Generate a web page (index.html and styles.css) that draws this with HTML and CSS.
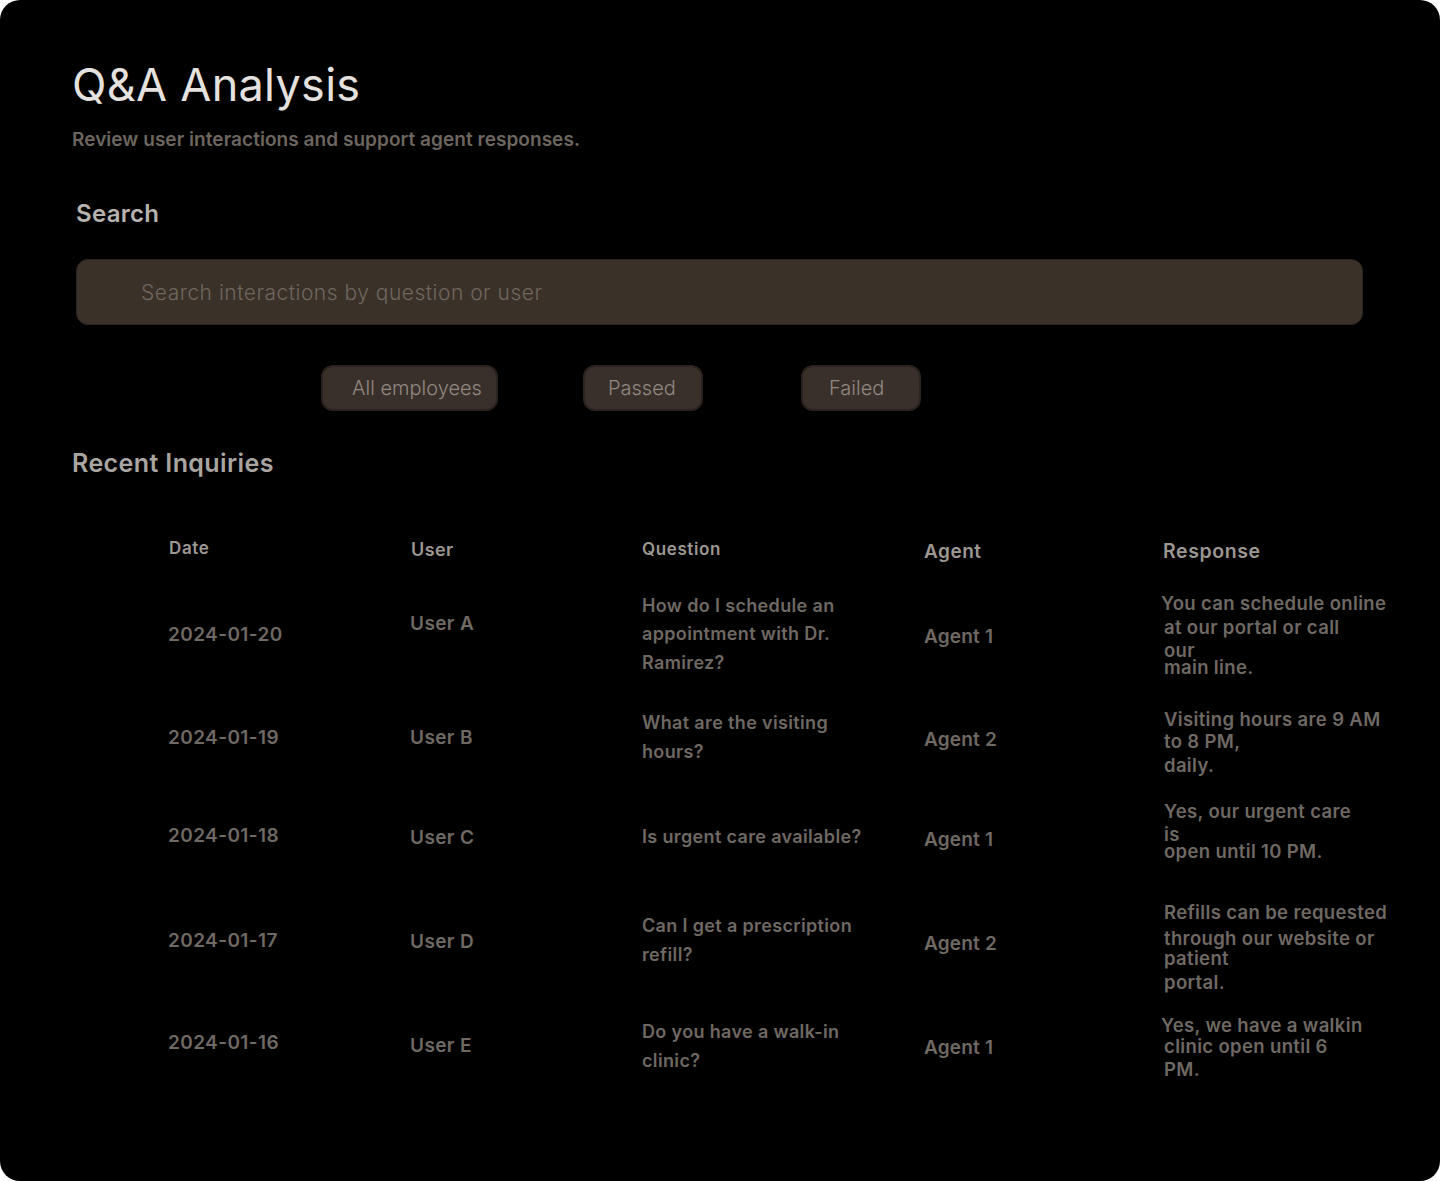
FILE: index.html
```html
<!DOCTYPE html>
<html lang="en">
<head>
<meta charset="utf-8">
<title>Q&amp;A Analysis</title>
<link rel="stylesheet" href="styles.css">
</head>
<body>
<main class="page">
  <h1 class="title">Q&amp;A Analysis</h1>
  <p class="subtitle">Review user interactions and support agent responses.</p>

  <h2 class="search-label">Search</h2>
  <div class="search-bar">
    <input class="search-input" type="text" placeholder="Search interactions by question or user">
  </div>

  <div class="filters">
    <button class="pill pill-all">All employees</button>
    <button class="pill pill-passed">Passed</button>
    <button class="pill pill-failed">Failed</button>
  </div>

  <h2 class="section-title">Recent Inquiries</h2>

  <div class="table">
    <div class="thead">
      <div class="th th-date">Date</div>
      <div class="th th-user">User</div>
      <div class="th th-question">Question</div>
      <div class="th th-agent">Agent</div>
      <div class="th th-response">Response</div>
    </div>

    <div class="tr">
      <div class="td date">2024-01-20</div>
      <div class="td user up">User A</div>
      <div class="td question">How do I schedule an appointment with Dr. Ramirez?</div>
      <div class="td agent">Agent 1</div>
      <div class="td response">
        <span class="ln out">You can schedule online</span>
        <span class="ln m2">at our portal or call</span>
        <span class="ln m1">our</span>
        <span class="ln m-5">main line.</span>
      </div>
    </div>

    <div class="tr">
      <div class="td date">2024-01-19</div>
      <div class="td user">User B</div>
      <div class="td question">What are the visiting hours?</div>
      <div class="td agent">Agent 2</div>
      <div class="td response down9">
        <span class="ln">Visiting hours are 9 AM</span>
        <span class="ln">to 8 PM,</span>
        <span class="ln m2">daily.</span>
      </div>
    </div>

    <div class="tr">
      <div class="td date up10">2024-01-18</div>
      <div class="td user up6">User C</div>
      <div class="td question up6">Is urgent care available?</div>
      <div class="td agent up6">Agent 1</div>
      <div class="td response up19">
        <span class="ln">Yes, our urgent care</span>
        <span class="ln m1">is</span>
        <span class="ln m-5">open until 10 PM.</span>
      </div>
    </div>

    <div class="tr">
      <div class="td date up6">2024-01-17</div>
      <div class="td user up4">User D</div>
      <div class="td question up6">Can I get a prescription refill?</div>
      <div class="td agent up4">Agent 2</div>
      <div class="td response down7">
        <span class="ln">Refills can be requested</span>
        <span class="ln m4">through our website or</span>
        <span class="ln m-2">patient</span>
        <span class="ln m2">portal.</span>
      </div>
    </div>

    <div class="tr">
      <div class="td date up8">2024-01-16</div>
      <div class="td user up2">User E</div>
      <div class="td question">Do you have a walk-in clinic?</div>
      <div class="td agent up2">Agent 1</div>
      <div class="td response">
        <span class="ln out">Yes, we have a walkin</span>
        <span class="ln m-1">clinic open until 6</span>
        <span class="ln m1">PM.</span>
      </div>
    </div>
  </div>
</main>
</body>
</html>
```

FILE: styles.css
```css
* {
  box-sizing: border-box;
}

html, body {
  margin: 0;
  padding: 0;
  background: #ffffff;
}

body {
  font-family: "Inter", "Noto Sans", sans-serif;
}

.page {
  width: 1440px;
  height: 1181px;
  background: #000000;
  border-radius: 20px;
  padding: 58px 0 0 72px;
  overflow: hidden;
}

.title {
  margin: 0;
  font-size: 45px;
  line-height: 54px;
  font-weight: 400;
  color: #e4e1de;
  letter-spacing: 0.3px;
}

.subtitle {
  margin: 16px 0 0;
  font-size: 19px;
  line-height: 24px;
  font-weight: 600;
  color: #6c665f;
  letter-spacing: 0.05px;
}

.search-label {
  margin: 48px 0 0 4px;
  font-size: 24px;
  line-height: 28px;
  font-weight: 600;
  color: #b7b3ae;
  letter-spacing: 0.3px;
}

.search-bar {
  margin: 31px 0 0 4px;
  width: 1287px;
  height: 66px;
  background: #3a3129;
  border: 1px solid #2c251f;
  border-radius: 12px;
  display: flex;
  align-items: center;
  padding-left: 64px;
}

.search-input {
  width: 100%;
  border: none;
  outline: none;
  background: transparent;
  font-family: "Inter", sans-serif;
  font-size: 21px;
  font-weight: 300;
  letter-spacing: 0.5px;
  color: #8a8178;
  padding: 0;
}

.search-input::placeholder {
  color: #70675e;
}

.filters {
  margin: 40px 0 0 249px;
  display: flex;
  align-items: center;
}

.pill {
  height: 46px;
  background: #3a302b;
  border: 2px solid #2b231e;
  border-radius: 12px;
  font-family: "Inter", sans-serif;
  font-size: 20px;
  font-weight: 300;
  color: #918881;
  padding: 0;
  display: flex;
  align-items: center;
}

.pill-all {
  width: 177px;
  padding-left: 29px;
}

.pill-passed {
  width: 120px;
  margin-left: 85px;
  padding-left: 23px;
}

.pill-failed {
  width: 120px;
  margin-left: 98px;
  padding-left: 26px;
}

.section-title {
  margin: 37px 0 0;
  font-size: 25px;
  line-height: 30px;
  font-weight: 600;
  color: #a9a5a0;
  letter-spacing: 0.4px;
}

.table {
  margin: 51px 0 0 96px;
}

.thead,
.tr {
  display: grid;
  grid-template-columns: 242px 232px 282px 239px 1fr;
  align-items: center;
}

.thead {
  height: 40px;
  margin-bottom: 14px;
}

.th {
  font-weight: 600;
  color: #9c9791;
}

.th-date { font-size: 17px; letter-spacing: 0.6px; margin-top: -2px; padding-left: 1px; }
.th-user { font-size: 18px; letter-spacing: 0.4px; padding-left: 1px; }
.th-question { font-size: 17px; letter-spacing: 0.6px; }
.th-agent { font-size: 19px; letter-spacing: 0.5px; margin-top: 4px; }
.th-response { font-size: 19.5px; letter-spacing: 0.6px; margin-top: 4px; }

.tr {
  height: 103px;
}

.td {
  font-weight: 600;
  color: #6f6963;
}

.date {
  font-size: 19px;
  letter-spacing: 0.4px;
}

.user {
  font-size: 19px;
  letter-spacing: 0.4px;
}

.user.up {
  margin-top: -22px;
}

.question {
  font-size: 18px;
  line-height: 28.5px;
  letter-spacing: 0.35px;
  width: 222px;
}

.agent {
  font-size: 19px;
  margin-top: 4px;
  letter-spacing: 0.2px;
}

.response {
  font-size: 18.5px;
  letter-spacing: 0.35px;
  display: flex;
  flex-direction: column;
}

.ln {
  display: block;
  line-height: 22px;
  padding-left: 1px;
}

.ln.out { margin-left: -3px; }
.ln.m4 { margin-top: 4px; }
.ln.m2 { margin-top: 2px; }
.ln.m1 { margin-top: 1px; }
.ln.m-1 { margin-top: -1px; }
.ln.m-2 { margin-top: -2px; }
.ln.m-5 { margin-top: -5px; }

.down9 { margin-top: 9px; }
.down7 { margin-top: 7px; }
.up19 { margin-bottom: 19px; }
.up10 { margin-bottom: 10px; }
.up8 { margin-bottom: 8px; }
.up6 { margin-bottom: 6px; }
.up4 { margin-bottom: 4px; }
.up2 { margin-bottom: 2px; }
```
